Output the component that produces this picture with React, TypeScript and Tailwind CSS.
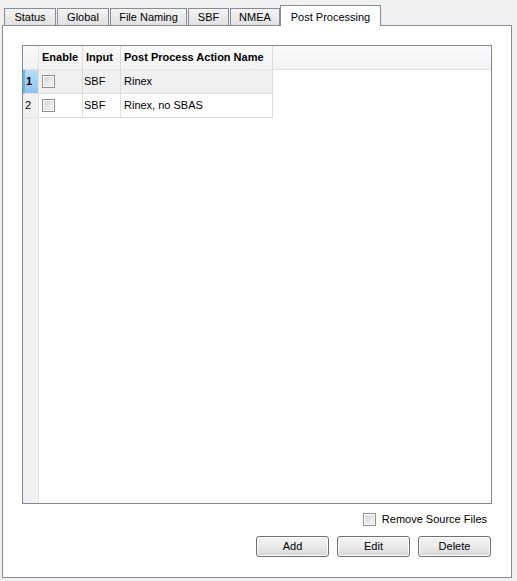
import React, { useState } from 'react';

const tabs = [
  { label: 'Status', w: 'w-[52px]' },
  { label: 'Global', w: 'w-[52px]' },
  { label: 'File Naming', w: 'w-[77px]' },
  { label: 'SBF', w: 'w-[41px]' },
  { label: 'NMEA', w: 'w-[50px]' },
];

const rows = [
  { id: 1, input: 'SBF', name: 'Rinex' },
  { id: 2, input: 'SBF', name: 'Rinex, no SBAS' },
];

const CheckBox: React.FC<{ checked: boolean; onChange: () => void }> = ({ checked, onChange }) => (
  <button
    onClick={onChange}
    className="w-[13px] h-[13px] shrink-0 border border-[#8e8f8f] bg-white p-px flex"
  >
    <span className="flex-1 border border-[#e4e4e4] bg-gradient-to-br from-[#d4d4d4] to-[#f9f9f9] flex items-center justify-center text-[9px] leading-none text-[#333]">
      {checked ? '✓' : ''}
    </span>
  </button>
);

const WinButton: React.FC<{ label: string }> = ({ label }) => (
  <button className="w-[73px] h-[21px] rounded-[3px] border border-[#707070] bg-gradient-to-b from-[#f2f2f2] via-[#ebebeb] to-[#d6d6d6] text-[11px] text-black shadow-[inset_0_0_0_1px_#fcfcfc]">
    {label}
  </button>
);

const App: React.FC = () => {
  const [enabled, setEnabled] = useState<Record<number, boolean>>({});
  const [removeSource, setRemoveSource] = useState(false);

  return (
    <div className="w-[517px] h-[581px] bg-[#f0f0f0] text-[11px] text-black font-['Liberation_Sans',Arial,sans-serif]">
      {/* Tab strip */}
      <div className="flex items-end h-[25px] pl-[4px] relative z-10">
        {tabs.map((t) => (
          <div
            key={t.label}
            className={`${t.w} mr-[1px] h-[17px] border border-b-0 border-[#898c95] bg-gradient-to-b from-[#f3f3f3] to-[#e1e1e1] flex items-center justify-center`}
          >
            {t.label}
          </div>
        ))}
        <div className="w-[101px] -ml-[1px] h-[21px] -mb-px border border-b-0 border-[#898c95] bg-white flex items-start justify-center pt-[3px]">
          Post Processing
        </div>
      </div>

      {/* Panel */}
      <div className="ml-[2px] w-[510px] h-[553px] border border-[#898c95] bg-white flex flex-col pt-[19px] pl-[19px] pr-[19px]">
        {/* Table */}
        <div className="w-[470px] h-[459px] border border-[#828790] flex">
          <div className="w-[16px] bg-[#f0f0f0] border-r border-[#e3e3e3] flex flex-col">
            <div className="h-[24px] border-b border-[#e3e3e3] bg-gradient-to-b from-[#fbfbfb] to-[#f0f0f0]" />
            {rows.map((r) => (
              <div
                key={r.id}
                className={`h-[24px] border-b border-[#e3e3e3] flex items-center ${
                  r.id === 1
                    ? 'bg-gradient-to-b from-[#b9dcf6] to-[#8cc4ee] border-l-2 border-l-[#6fb1e4] pl-px font-bold'
                    : 'pl-[2px]'
                }`}
              >
                {r.id}
              </div>
            ))}
          </div>
          <div className="flex-1 flex flex-col">
            <div className="h-[24px] flex border-b border-[#e3e3e3] bg-gradient-to-b from-[#fbfbfb] to-[#f2f2f2] font-bold">
              <div className="w-[44px] border-r border-[#dcdcdc] flex items-center pl-[3px]">Enable</div>
              <div className="w-[38px] border-r border-[#dcdcdc] flex items-center pl-[3px]">Input</div>
              <div className="w-[152px] border-r border-[#dcdcdc] flex items-center pl-[3px]">Post Process Action Name</div>
              <div className="flex-1" />
            </div>
            {rows.map((r) => (
              <div key={r.id} className="h-[24px] flex">
                <div className={`w-[234px] flex border-b border-r border-[#dcdcdc] ${r.id === 1 ? 'bg-[#f0f0f0]' : 'bg-white'}`}>
                  <div className="w-[44px] border-r border-[#dcdcdc] flex items-center pl-[3px]">
                    <CheckBox
                      checked={!!enabled[r.id]}
                      onChange={() => setEnabled((e) => ({ ...e, [r.id]: !e[r.id] }))}
                    />
                  </div>
                  <div className="w-[38px] border-r border-[#dcdcdc] flex items-center pl-[1px]">{r.input}</div>
                  <div className="flex-1 flex items-center pl-[3px]">{r.name}</div>
                </div>
              </div>
            ))}
          </div>
        </div>

        {/* Remove source files */}
        <div className="flex justify-end items-center gap-[6px] mt-[8px] pr-[5px] h-[15px]">
          <CheckBox checked={removeSource} onChange={() => setRemoveSource(!removeSource)} />
          <span>Remove Source Files</span>
        </div>

        {/* Buttons */}
        <div className="flex justify-end gap-[8px] mt-[9px] pr-px">
          <WinButton label="Add" />
          <WinButton label="Edit" />
          <WinButton label="Delete" />
        </div>
      </div>
    </div>
  );
};

export default App;
